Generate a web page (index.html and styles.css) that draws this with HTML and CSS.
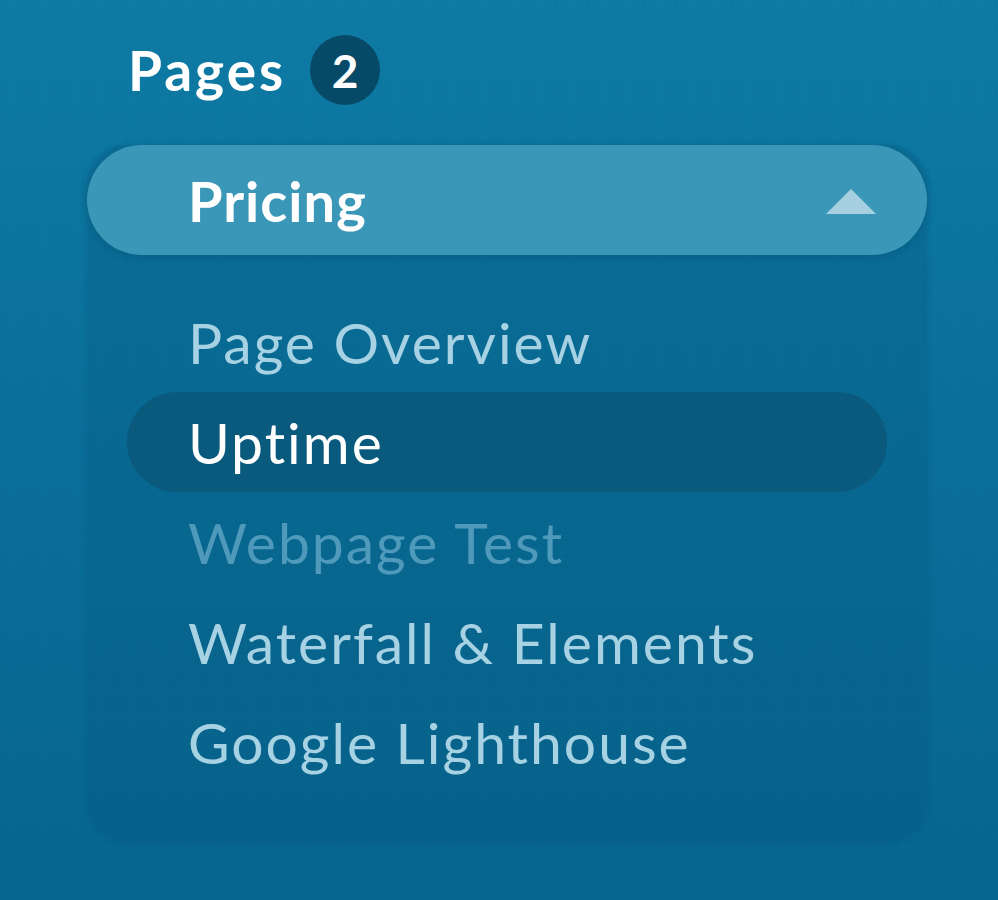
FILE: index.html
```html
<!DOCTYPE html>
<html lang="en">
<head>
  <meta charset="UTF-8">
  <title>Pages</title>
  <link rel="stylesheet" href="styles.css">
</head>
<body>
  <div class="sidebar">
    <div class="titulo">
      <span>Pages</span>
      <span class="badge">2</span>
    </div>

    <div class="panel">
      <div class="cabecera">
        <span>Pricing</span>
        <span class="flecha"></span>
      </div>

      <ul class="lista">
        <li>Page Overview</li>
        <li class="activo">Uptime</li>
        <li class="apagado">Webpage Test</li>
        <li>Waterfall &amp; Elements</li>
        <li>Google Lighthouse</li>
      </ul>
    </div>
  </div>
</body>
</html>
```

FILE: styles.css
```css
    body, html {
      margin: 0;
      padding: 0;
      height: 900px;
      width: 998px;
      overflow: hidden;
      font-family: 'Lato', sans-serif;
    }

    body {
      background-color: #0b719c;
      background-image:
        radial-gradient(rgba(0, 40, 70, 0.07) 1px, transparent 1.5px),
        linear-gradient(180deg, #0e7ba4 0%, #0a6f99 50%, #07658f 100%);
      background-size: 11px 11px, 100% 100%;
    }

    .sidebar {
      padding: 35px 0 0 87px;
      width: 840px;
    }

    .titulo {
      display: flex;
      align-items: center;
      gap: 24px;
      margin-left: 41px;
      height: 70px;
      color: #ffffff;
      font-weight: 700;
      font-size: 55px;
      letter-spacing: 3px;
    }

    .badge {
      width: 70px;
      height: 70px;
      border-radius: 50%;
      background-color: #064a67;
      display: flex;
      align-items: center;
      justify-content: center;
      font-size: 46px;
      letter-spacing: 0;
    }

    .panel {
      margin-top: 40px;
      background-color: rgba(5, 80, 120, 0.22);
      border-radius: 40px;
      padding-bottom: 48px;
      box-shadow: 0 2px 6px rgba(0, 40, 70, 0.12);
    }

    .cabecera {
      height: 110px;
      border-radius: 55px;
      background-color: #3b97b8;
      box-shadow: 0 2px 8px rgba(0, 50, 80, 0.25);
      display: flex;
      align-items: center;
      justify-content: space-between;
      padding: 0 51px 0 101px;
      color: #ffffff;
      font-weight: 700;
      font-size: 56px;
      letter-spacing: 1px;
    }

    /* triangulo hacia arriba */
    .flecha {
      width: 0;
      height: 0;
      border-left: 25px solid transparent;
      border-right: 25px solid transparent;
      border-bottom: 25px solid #a6cfdf;
      margin-top: 2px;
    }

    .lista {
      list-style: none;
      margin: 0;
      padding: 37px 40px 0 40px;
    }

    .lista li {
      height: 100px;
      display: flex;
      align-items: center;
      padding-left: 61px;
      border-radius: 50px;
      font-size: 57px;
      letter-spacing: 2px;
      color: #a7d2e3;
    }

    .lista li.activo {
      background-color: #0a5a7e;
      color: #ffffff;
    }

    .lista li.apagado {
      color: #4f9abb;
    }
```
